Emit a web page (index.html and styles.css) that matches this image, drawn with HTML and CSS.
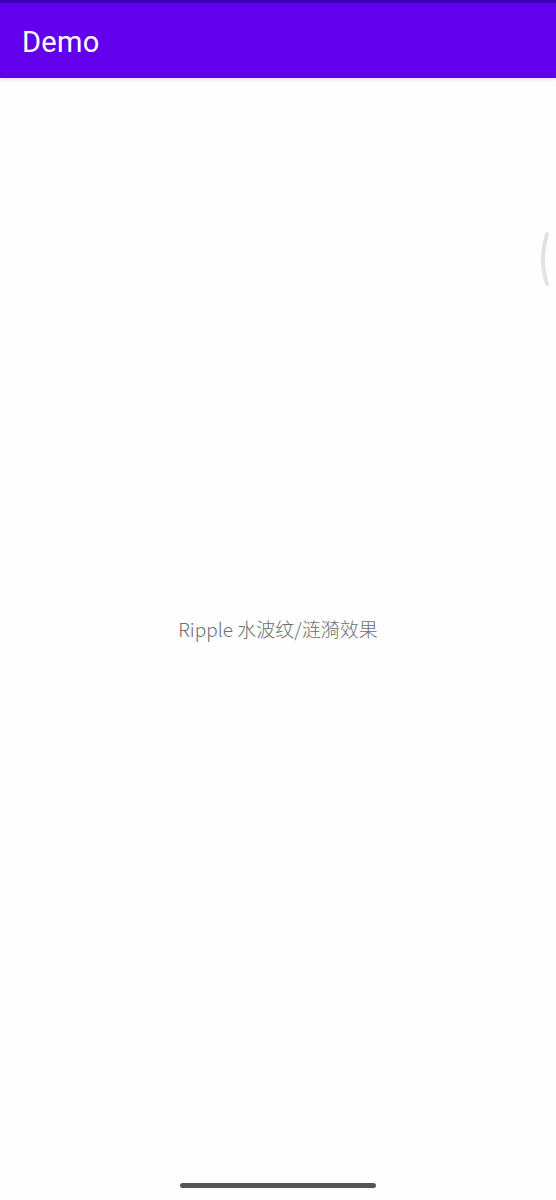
FILE: index.html
```html
<!DOCTYPE html>
<html>
<head>
<meta charset="utf-8">
<link rel="stylesheet" href="styles.css">
</head>
<body>
<div class="screen">
  <div class="status-bar"></div>
  <header class="app-bar"><h1 class="title">Demo</h1></header>
  <main class="content">
    <p class="label">Ripple 水波纹/涟漪效果</p>
    <svg class="refresh" width="20" height="60" viewBox="0 0 20 60">
      <path d="M 8 5 Q 0 30 8 55" fill="none" stroke="#e2e2e2" stroke-width="4" stroke-linecap="round"/>
    </svg>
  </main>
  <footer class="nav-bar"><span class="home-indicator"></span></footer>
</div>
</body>
</html>
```
FILE: styles.css
```css
html, body {
  margin: 0;
  padding: 0;
  background: #fefefe;
}
.screen {
  width: 556px;
  height: 1200px;
  display: flex;
  flex-direction: column;
  position: relative;
  overflow: hidden;
  font-family: Roboto, "Noto Sans CJK SC", sans-serif;
}
.status-bar {
  height: 3px;
  background: #3a00b8;
}
.app-bar {
  height: 75px;
  background: #6200ee;
  display: flex;
  align-items: center;
  padding-left: 22px;
  padding-top: 3px;
  box-sizing: border-box;
  box-shadow: 0 2px 4px rgba(98, 0, 238, 0.12);
  position: relative;
  z-index: 1;
}
.title {
  margin: 0;
  color: #ffffff;
  font-size: 29px;
  font-weight: 400;
  letter-spacing: 0.3px;
}
.content {
  flex: 1;
  display: flex;
  align-items: center;
  justify-content: center;
  position: relative;
}
.label {
  margin: 0;
  font-family: "Noto Sans CJK SC", sans-serif;
  font-size: 19px;
  font-weight: 300;
  color: #6e6e6e;
}
.refresh {
  position: absolute;
  left: 539px;
  top: 151px;
}
.nav-bar {
  height: 22px;
  display: flex;
  justify-content: center;
  align-items: flex-start;
}
.home-indicator {
  margin-top: 5px;
  width: 196px;
  height: 5px;
  border-radius: 3px;
  background: #555555;
}
```
